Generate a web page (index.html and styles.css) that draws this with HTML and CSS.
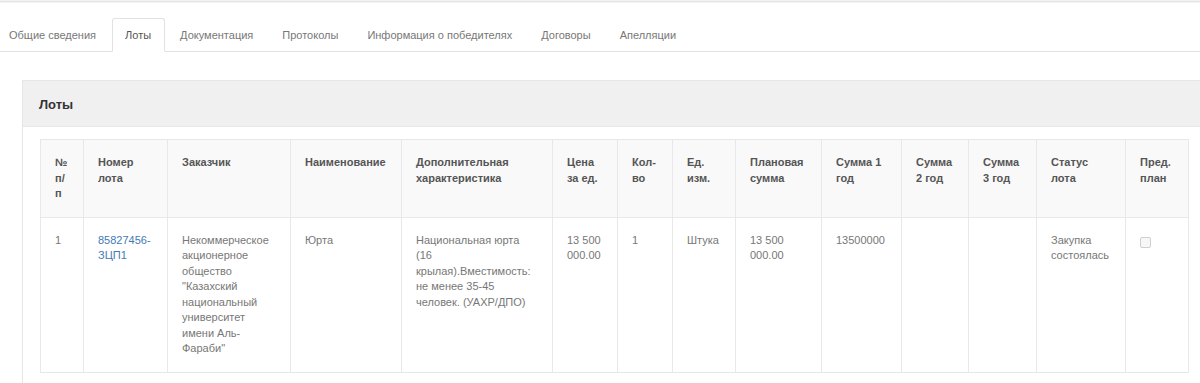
FILE: index.html
```html
<!DOCTYPE html>
<html lang="ru">
<head>
<meta charset="utf-8">
<title>Лоты</title>
<link rel="stylesheet" href="styles.css">
</head>
<body>
<div class="topline"></div>
<ul class="tabs">
  <li class="tab">Общие сведения</li>
  <li class="tab active">Лоты</li>
  <li class="tab">Документация</li>
  <li class="tab">Протоколы</li>
  <li class="tab">Информация о победителях</li>
  <li class="tab">Договоры</li>
  <li class="tab">Апелляции</li>
</ul>
<div class="panel">
  <div class="panel-heading">Лоты</div>
  <div class="panel-body">
    <table class="lots">
      <colgroup>
        <col class="c1"><col class="c2"><col class="c3"><col class="c4"><col class="c5"><col class="c6"><col class="c7"><col class="c8"><col class="c9"><col class="c10"><col class="c11"><col class="c12"><col class="c13"><col class="c14">
      </colgroup>
      <thead>
        <tr>
          <th>№ п/ п</th>
          <th>Номер лота</th>
          <th>Заказчик</th>
          <th>Наименование</th>
          <th>Дополнительная характеристика</th>
          <th>Цена за ед.</th>
          <th>Кол-во</th>
          <th>Ед. изм.</th>
          <th>Плановая сумма</th>
          <th>Сумма 1 год</th>
          <th>Сумма 2 год</th>
          <th>Сумма 3 год</th>
          <th>Статус лота</th>
          <th>Пред. план</th>
        </tr>
      </thead>
      <tbody>
        <tr>
          <td>1</td>
          <td><a class="link" href="#">85827456-ЗЦП1</a></td>
          <td>Некоммерческое акционерное общество "Казахский национальный университет имени Аль-Фараби"</td>
          <td>Юрта</td>
          <td>Национальная юрта (16 крылая).Вместимость: не менее 35-45 человек. (УАХР/ДПО)</td>
          <td>13 500 000.00</td>
          <td>1</td>
          <td>Штука</td>
          <td>13 500 000.00</td>
          <td>13500000</td>
          <td></td>
          <td></td>
          <td>Закупка состоялась</td>
          <td><span class="checkbox"></span></td>
        </tr>
      </tbody>
    </table>
  </div>
</div>
</body>
</html>
```

FILE: styles.css
```css
html, body {
  margin: 0;
  padding: 0;
  overflow: hidden;
  background: #fff;
}
body {
  font-family: "Liberation Sans", Arial, sans-serif;
  color: #666;
  width: 1200px;
}
.topline {
  height: 1px;
  border-top: 1px solid #f2f2f2;
  background: #e4e4e4;
  border-bottom: 1px solid #f4f4f4;
}
.tabs {
  list-style: none;
  margin: 15px 0 0 -4.5px;
  padding: 0;
  display: flex;
  border-bottom: 1px solid #e1e1e1;
  font-size: 11px;
  line-height: 17px;
}
.tab {
  padding: 8px 12.5px 7px;
  margin-right: 2px;
  margin-bottom: -1px;
  border: 1px solid transparent;
  border-radius: 3px 3px 0 0;
  color: #777;
}
.tab.active {
  border-color: #e1e1e1;
  border-bottom-color: #fff;
  background: #fff;
  color: #555;
}
.panel {
  margin: 28px -6px 0 22px;
  border: 1px solid #e6e6e6;
  border-bottom: 0;
}
.panel-heading {
  background: #f0f0f0;
  padding: 16px 16px 13px;
  font-size: 13px;
  line-height: 16px;
  font-weight: bold;
  color: #333;
  border-bottom: 1px solid #e8e8e8;
}
.panel-body {
  padding: 12px 17px 20px;
}
.lots {
  border-collapse: collapse;
  table-layout: fixed;
  width: 1148px;
  font-size: 11px;
  line-height: 15.5px;
}
.lots th, .lots td {
  border: 1px solid #e8e8e8;
  padding: 15px 14px;
  text-align: left;
  vertical-align: top;
  word-wrap: break-word;
}
.lots th {
  background: #f9f9f9;
  color: #555;
  font-weight: bold;
}
.lots td {
  color: #777;
}
.lots .c1 { width: 43px; }
.lots .c2 { width: 84px; }
.lots .c3 { width: 123px; }
.lots .c4 { width: 111px; }
.lots .c5 { width: 151px; }
.lots .c6 { width: 65px; }
.lots .c7 { width: 55px; }
.lots .c8 { width: 63px; }
.lots .c9 { width: 86px; }
.lots .c10 { width: 80px; }
.lots .c11 { width: 67px; }
.lots .c12 { width: 68px; }
.lots .c13 { width: 89px; }
.lots .c14 { width: 63px; }
.link {
  color: #3f7ab5;
  text-decoration: none;
}
.checkbox {
  display: inline-block;
  width: 9px;
  height: 9px;
  margin-top: 4px;
  border: 1px solid #cfcfcf;
  border-radius: 2px;
  background: #f7f7f7;
}
```
